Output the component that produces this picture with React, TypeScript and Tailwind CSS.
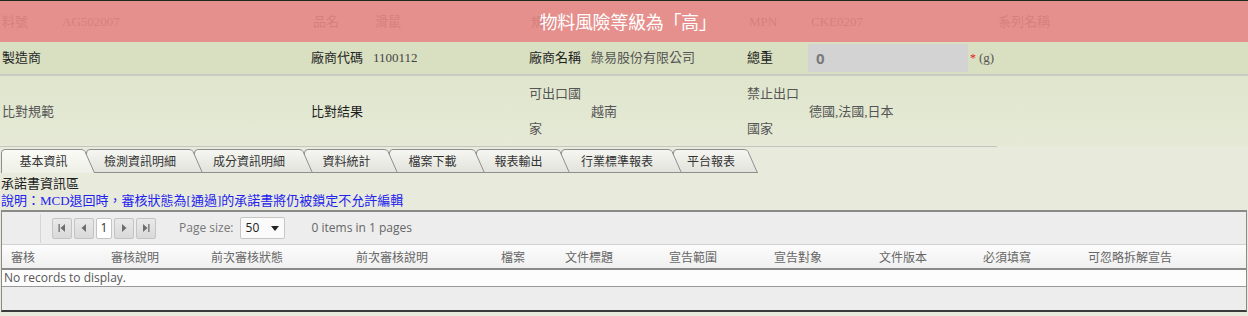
import React from "react";

const SERIF = "font-['Liberation_Serif','Noto_Sans_CJK_TC',serif]";
const SANS = "font-['Noto_Sans_CJK_TC',sans-serif]";
const UI = "font-['Open_Sans','Noto_Sans_CJK_TC',sans-serif]";

type Tab = { label: string; w: number; z: string; first?: boolean; active?: boolean };
const tabs: Tab[] = [
  { label: "基本資訊", w: 94, z: "z-[8]", first: true, active: true },
  { label: "檢測資訊明細", w: 117, z: "z-[7]" },
  { label: "成分資訊明細", w: 119, z: "z-[6]" },
  { label: "資料統計", w: 94, z: "z-[5]" },
  { label: "檔案下載", w: 96, z: "z-[4]" },
  { label: "報表輸出", w: 94, z: "z-[3]" },
  { label: "行業標準報表", w: 121, z: "z-[2]" },
  { label: "平台報表", w: 85, z: "z-[1]" },
];

function TabShape({ w, active }: { w: number; active?: boolean }) {
  const H = 24;
  const d = `M0.5,${H} L0.5,4 Q0.5,0.5 4,0.5 L${w - 14},0.5 Q${w - 11},0.5 ${w - 10},2.5 L${w - 0.5},${H}`;
  const id = active ? "tabA" : "tabI";
  return (
    <svg width={w} height={H} className="[grid-area:1/1] block">
      <defs>
        <linearGradient id="tabI" x1="0" y1="0" x2="0" y2="1">
          <stop offset="0" stopColor="#f6f6f2" />
          <stop offset="1" stopColor="#e2e2dc" />
        </linearGradient>
        <linearGradient id="tabA" x1="0" y1="0" x2="0" y2="1">
          <stop offset="0" stopColor="#fbfbf7" />
          <stop offset="1" stopColor="#eeefe6" />
        </linearGradient>
      </defs>
      <path d={d + " Z"} fill={`url(#${id})`} stroke="none" />
      <path d={d} fill="none" stroke="#8e8e8e" strokeWidth="1" />
      {!active && <path d={`M0,${H - 0.5} H${w}`} stroke="#8e8e8e" strokeWidth="1" />}
    </svg>
  );
}

function PagerBtn({ kind }: { kind: "first" | "prev" | "next" | "last" }) {
  return (
    <div className="w-[20px] h-[21px] flex items-center justify-center rounded-[2px] border border-[#c4c4c4] bg-gradient-to-b from-[#e9e9e9] to-[#d9d9d9]">
      <svg width="10" height="10" viewBox="0 0 10 10">
        {kind === "first" && (
          <>
            <rect x="1.5" y="1" width="1.3" height="8" fill="#6e6e6e" />
            <path d="M8 1 L3.5 5 L8 9 Z" fill="#6e6e6e" />
          </>
        )}
        {kind === "prev" && <path d="M7 1 L2.5 5 L7 9 Z" fill="#6e6e6e" />}
        {kind === "next" && <path d="M3 1 L7.5 5 L3 9 Z" fill="#6e6e6e" />}
        {kind === "last" && (
          <>
            <path d="M2 1 L6.5 5 L2 9 Z" fill="#6e6e6e" />
            <rect x="7.2" y="1" width="1.3" height="8" fill="#6e6e6e" />
          </>
        )}
      </svg>
    </div>
  );
}

const headers: { t: string; w: string }[] = [
  { t: "審核", w: "w-[100px]" },
  { t: "審核說明", w: "w-[100px]" },
  { t: "前次審核狀態", w: "w-[145px]" },
  { t: "前次審核說明", w: "w-[145px]" },
  { t: "檔案", w: "w-[64px]" },
  { t: "文件標題", w: "w-[104px]" },
  { t: "宣告範圍", w: "w-[105px]" },
  { t: "宣告對象", w: "w-[105px]" },
  { t: "文件版本", w: "w-[104px]" },
  { t: "必須填寫", w: "w-[105px]" },
  { t: "可忽略拆解宣告", w: "w-[140px]" },
];

export default function App() {
  return (
    <div className={`w-[1248px] h-[316px] overflow-hidden bg-[#e8eadb] border-t border-[#1d2a1d] ${SANS}`}>
      {/* red risk banner over first row */}
      <div className="grid h-[41px] bg-[#e6908d]">
        <div className={`[grid-area:1/1] flex items-center text-[13px] text-[#d5807e] ${SERIF}`}>
          <div className="w-[62px] pl-[2px]">料號</div>
          <div className="w-[251px]">AG502007</div>
          <div className="w-[62px]">品名</div>
          <div className="w-[156px]">滑鼠</div>
          <div className="w-[62px]">規格</div>
          <div className="w-[156px]"></div>
          <div className="w-[62px]">MPN</div>
          <div className="w-[187px]">CKE0207</div>
          <div className="w-[100px]">系列名稱</div>
        </div>
        <div className="[grid-area:1/1] flex items-center justify-center pl-[8px] text-white text-[18px] tracking-[-0.3px]">
          物料風險等級為「高」
        </div>
      </div>

      {/* row 2 */}
      <div className={`flex items-center h-[32px] bg-[#d9e0c1] text-[13px] ${SERIF}`}>
        <div className="w-[62px] pl-[2px] text-[#1e1e1e]">製造商</div>
        <div className="w-[249px]"></div>
        <div className="w-[62px] text-[#1e1e1e]">廠商代碼</div>
        <div className="w-[156px] text-[#444]">1100112</div>
        <div className="w-[62px] text-[#1e1e1e]">廠商名稱</div>
        <div className="w-[156px] text-[#555]">綠易股份有限公司</div>
        <div className="w-[61px] text-[#1e1e1e]">總重</div>
        <div className={`w-[160px] h-[28px] bg-[#d3d3d3] flex items-center pl-[8px] text-[15px] font-bold text-[#7a7a7a] ${UI}`}>0</div>
        <div className="pl-[2px] text-[#e02020] text-[12px] self-start mt-[7px]">*</div>
        <div className="pl-[3px] text-[#555]">(g)</div>
      </div>
      <div className="h-[2px] bg-[#c9c9c5]"></div>

      {/* row 3 */}
      <div className={`flex items-center h-[70px] bg-gradient-to-b from-[#e0e6cd] to-[#e5e9d6] text-[13px] leading-[35px] ${SERIF}`}>
        <div className="w-[62px] pl-[2px] text-[#555]">比對規範</div>
        <div className="w-[249px]"></div>
        <div className="w-[62px] text-[#1e1e1e]">比對結果</div>
        <div className="w-[156px]"></div>
        <div className="w-[62px] text-[#555]">可出口國家</div>
        <div className="w-[156px] text-[#555]">越南</div>
        <div className="w-[62px] text-[#555]">禁止出口國家</div>
        <div className="text-[#555]">德國,法國,日本</div>
      </div>
      <div className="h-px w-[997px] bg-[#c4c4c0]"></div>
      <div className="h-[2px]"></div>

      {/* tabs */}
      <div className="flex items-end h-[24px] pl-px">
        {tabs.map((t) => (
          <div key={t.label} className={`relative ${t.z} grid ${t.first ? "" : "ml-[-9px]"}`} style={{ width: t.w }}>
            <TabShape w={t.w} active={t.active} />
            <div className="[grid-area:1/1] flex items-center justify-center pr-[9px] text-[12px] text-[#333] leading-none">
              {t.label}
            </div>
          </div>
        ))}
      </div>

      {/* notes */}
      <div className={`pt-[2px] pl-px ${SERIF}`}>
        <div className="text-[13px] leading-[17px] text-[#1e1e1e]">承諾書資訊區</div>
        <div className="text-[13px] leading-[17px] text-[#2222ee]">說明：MCD退回時，審核狀態為[通過]的承諾書將仍被鎖定不允許編輯</div>
      </div>

      {/* grid */}
      <div className="mt-px ml-px w-[1246px] border-t-2 border-x border-b-2 border-[#8a8a8a] border-b-[#3a3a3a] bg-[#ededed]">
        {/* pager */}
        <div className={`flex items-center h-[33px] border-b border-[#d2d2d2] text-[12px] text-[#777] ${UI}`}>
          <div className="w-[39px] h-[29px] border-r border-[#d6d6d6]"></div>
          <div className="flex items-center gap-[2px] pl-[11px]">
            <PagerBtn kind="first" />
            <PagerBtn kind="prev" />
            <div className="w-[16px] h-[21px] flex items-center justify-center rounded-[2px] border border-[#c4c4c4] bg-white text-[12px] text-[#333]">1</div>
            <PagerBtn kind="next" />
            <PagerBtn kind="last" />
          </div>
          <div className="pl-[23px]">Page size:</div>
          <div className="ml-[6px] w-[45px] h-[22px] flex items-center justify-between px-[5px] rounded-[2px] border border-[#c6c6c6] bg-[#fafafa] text-[#222]">
            <span>50</span>
            <svg width="8" height="5" viewBox="0 0 8 5"><path d="M0 0 H8 L4 5 Z" fill="#222" /></svg>
          </div>
          <div className="pl-[27px] text-[#666]">0 items in 1 pages</div>
        </div>
        {/* header */}
        <div className={`flex items-center h-[25px] bg-gradient-to-b from-[#fcfcfc] to-[#f0f0f0] text-[12px] text-[#666] border-b-2 border-[#8a8a8a] ${SANS}`}>
          <div className="w-[9px]"></div>
          {headers.map((h) => (
            <div key={h.t} className={h.w}>{h.t}</div>
          ))}
        </div>
        {/* empty row */}
        <div className={`h-[17px] flex items-center bg-[#fdfdfd] pl-[2px] text-[12px] text-[#555] border-b border-[#9a9a9a] ${UI}`}>
          No records to display.
        </div>
        <div className="h-[23px]"></div>
      </div>
    </div>
  );
}
